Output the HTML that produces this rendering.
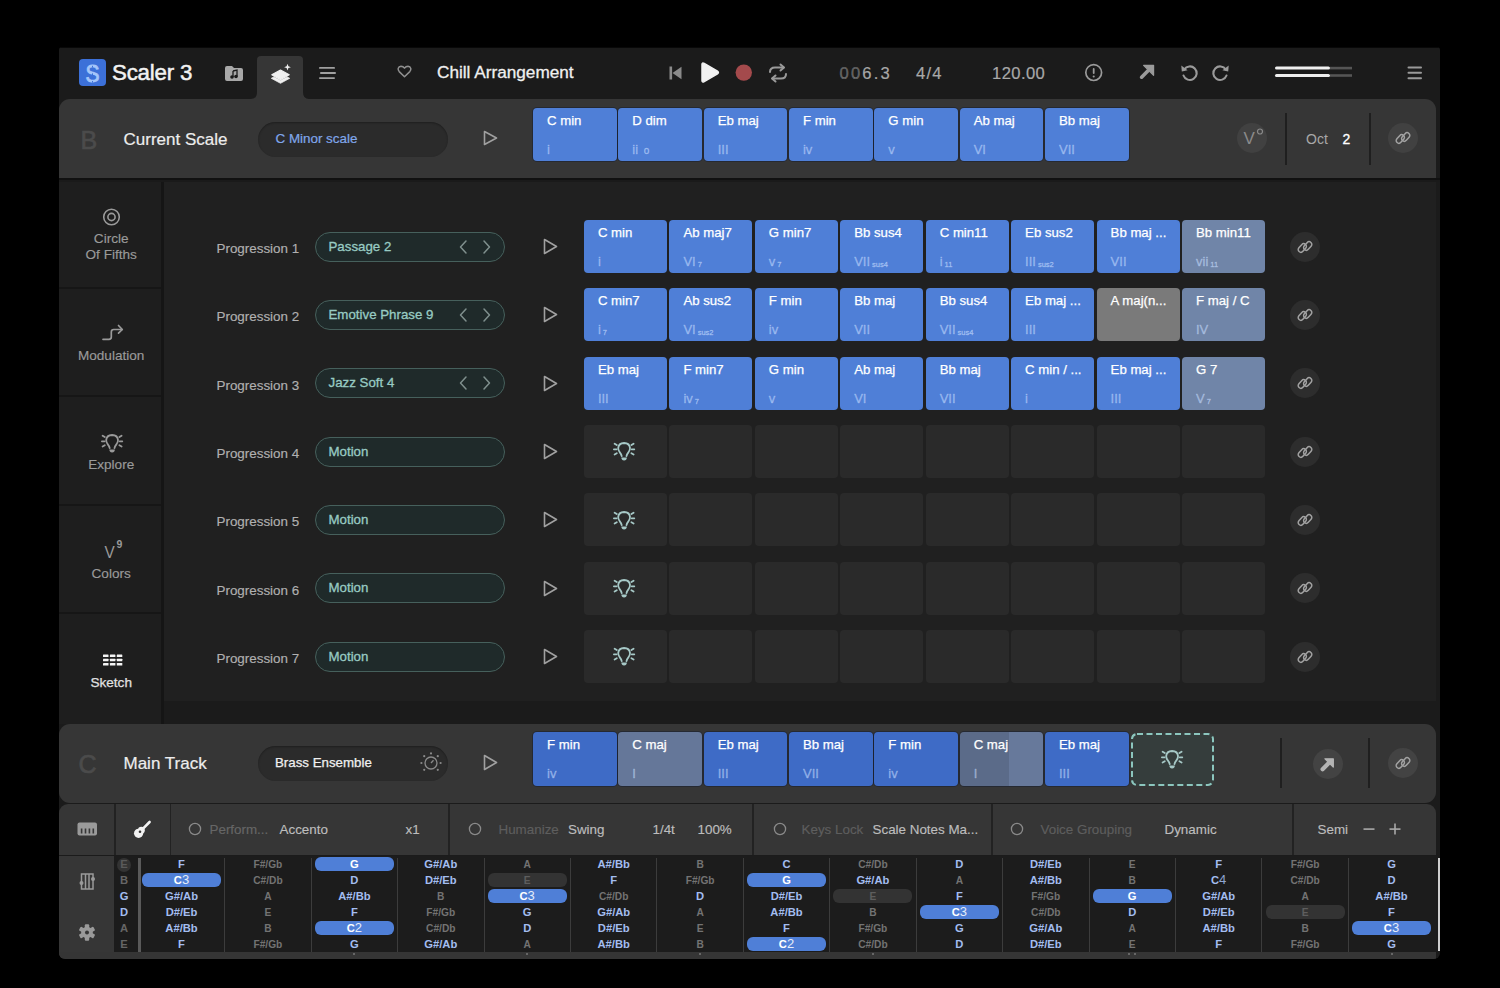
<!DOCTYPE html><html><head><meta charset="utf-8"><style>
*{margin:0;padding:0;box-sizing:border-box}
html,body{width:1500px;height:988px;background:#000;overflow:hidden;font-family:"Liberation Sans",sans-serif;color:#ddd}
.a{position:absolute;white-space:nowrap}
svg.a{overflow:visible}
#win{position:absolute;left:59px;top:47px;width:1381px;height:912px;background:#1b1b1b;overflow:hidden;border-radius:3px 3px 6px 6px}
.sec{position:absolute;background:#363636;border-radius:11px}
.card{position:absolute;width:83px;height:53px;border-radius:4px;background:#4f7fd7}
.card .n{position:absolute;left:14px;top:5px;font-size:13.2px;color:#fff;white-space:nowrap;-webkit-text-stroke:0.25px #fff}
.card .r{position:absolute;left:14px;top:34.2px;font-size:13px;color:rgba(200,222,255,0.5);white-space:nowrap;-webkit-text-stroke:0.45px rgba(200,222,255,0.45)}
.card .r small{font-size:7.5px;position:relative;top:1px;margin-left:2px}
.empty{position:absolute;width:83px;height:53px;border-radius:4px;background:#2a2a2a}
.plabel{position:absolute;font-size:13.4px;color:#b0b0b0;white-space:nowrap;-webkit-text-stroke:0.15px #b0b0b0}
.pill{position:absolute;width:190px;height:30px;border-radius:15px;background:#1f2a2a;border:1.6px solid #46605c}
.pill .t{position:absolute;left:13px;top:6.3px;font-size:13.3px;color:#98cbc3;white-space:nowrap;-webkit-text-stroke:0.3px #98cbc3}
.side{position:absolute;left:0;width:102px;background:#1e1e1e}
.lbl{position:absolute;left:1.7px;width:101px;text-align:center;font-size:13.6px;color:#9a9a9a;line-height:16px;-webkit-text-stroke:0.15px #9a9a9a}
.fb{position:absolute;font-size:11.2px;font-weight:bold;text-align:center;width:86px;line-height:16px;white-space:nowrap}
.tb{position:absolute;font-size:13.4px;white-space:nowrap;-webkit-text-stroke:0.15px currentColor}
</style></head><body>
<div id="win">
<div class="a" style="left:198px;top:9px;width:46px;height:50px;background:#363636;border-radius:4px 4px 0 0"></div>
<svg class="a" style="left:192.00px;top:45.00px" width="6" height="7" viewBox="0 0 6 7" ><path d="M0 7 Q6 7 6 0 L6 7 Z" fill="#363636"/></svg>
<svg class="a" style="left:244.00px;top:45.00px" width="6" height="7" viewBox="0 0 6 7" ><path d="M6 7 Q0 7 0 0 L0 7 Z" fill="#363636"/></svg>
<div class="a" style="left:20px;top:12px;width:27px;height:27px;background:#3c70d8;border-radius:4px"></div>
<svg class="a" style="left:20.00px;top:12.00px" width="27" height="27" viewBox="0 0 27 27" ><g transform="translate(13.5,0) scale(0.86,1)"><text x="0" y="22.6" text-anchor="middle" font-family="Liberation Sans" font-size="24.5" fill="#a4c6fa" stroke="#a4c6fa" stroke-width="0.9">S</text></g><path d="M13.5 3 V25" stroke="#3c70d8" stroke-width="1" stroke-dasharray="1.6 2.2"/></svg>
<div class="a" style="left:53px;top:13px;font-size:22.3px;color:#f2f2f2;-webkit-text-stroke:0.5px #f2f2f2;letter-spacing:-0.2px">Scaler 3</div>
<svg class="a" style="left:165.00px;top:18.00px" width="20" height="17" viewBox="0 0 20 17" ><path d="M1 3 Q1 1 3 1 L8 1 L10 3 L17 3 Q19 3 19 5 L19 14 Q19 16 17 16 L3 16 Q1 16 1 14 Z" fill="#a8a8a8"/><path d="M9 6 L13 5 L13 11.5" stroke="#1b1b1b" stroke-width="1.3" fill="none"/><circle cx="8" cy="12" r="1.8" fill="#1b1b1b"/><circle cx="12" cy="11.5" r="1.8" fill="#1b1b1b"/><path d="M9 6 L9 12" stroke="#1b1b1b" stroke-width="1.3"/></svg>
<svg class="a" style="left:209.00px;top:16.00px" width="26" height="22" viewBox="0 0 26 22" ><path d="M3.8 11.8 L12.5 7 L21.2 11.8 L12.5 16.6 Z" fill="#f0f0f0" stroke="#f0f0f0" stroke-width="1.2" stroke-linejoin="round"/><path d="M3.3 15.3 L6 13.9 L12.5 17.5 L19 13.9 L21.7 15.3 L12.5 20.3 Z" fill="#f0f0f0" stroke="#f0f0f0" stroke-width="0.8" stroke-linejoin="round"/><path d="M19.5 0.8 L20.4 3.3 L22.9 4.2 L20.4 5.1 L19.5 7.6 L18.6 5.1 L16.1 4.2 L18.6 3.3 Z" fill="#f0f0f0"/></svg>
<svg class="a" style="left:259.00px;top:19.00px" width="19" height="14" viewBox="0 0 19 14" ><rect x="1" y="1" width="16" height="1.8" rx="0.9" fill="#a0a0a0"/><rect x="2" y="6.1" width="16" height="1.8" rx="0.9" fill="#a0a0a0"/><rect x="1" y="11.2" width="16" height="1.8" rx="0.9" fill="#a0a0a0"/></svg>
<svg class="a" style="left:338.00px;top:18.00px" width="15" height="13" viewBox="0 0 15 13" ><path d="M7.5 11.8 L2.2 6.6 Q0.8 5.1 1.2 3.4 Q1.8 1.3 4 1.2 Q6.2 1.2 7.5 3.2 Q8.8 1.2 11 1.2 Q13.2 1.3 13.8 3.4 Q14.2 5.1 12.8 6.6 Z" fill="none" stroke="#8f8f8f" stroke-width="1.5" stroke-linejoin="round"/></svg>
<div class="a" style="left:378px;top:15px;font-size:17.2px;color:#f0f0f0;-webkit-text-stroke:0.3px #f0f0f0">Chill Arrangement</div>
<svg class="a" style="left:609.00px;top:19.00px" width="14" height="14" viewBox="0 0 14 14" ><rect x="1.5" y="0.5" width="2.6" height="13" fill="#8a8a8a"/><path d="M13.5 0.8 L4.5 7 L13.5 13.2 Z" fill="#8a8a8a"/></svg>
<svg class="a" style="left:640.00px;top:14.00px" width="21" height="24" viewBox="0 0 21 24" ><path d="M3 3.5 Q3 1.2 5.2 2.4 L18.5 10.2 Q20.3 11.5 18.5 12.8 L5.2 20.6 Q3 21.8 3 19.5 Z" fill="#f2f2f2" stroke="#f2f2f2" stroke-width="1.5" stroke-linejoin="round"/></svg>
<svg class="a" style="left:676.00px;top:17.00px" width="18" height="18" viewBox="0 0 18 18" ><circle cx="8.8" cy="8.6" r="8.2" fill="#a44a4c"/></svg>
<svg class="a" style="left:708.00px;top:16.00px" width="22" height="20" viewBox="0 0 22 20" ><path d="M3 9 Q3 4.5 8 4.5 L16.5 4.5" fill="none" stroke="#9a9a9a" stroke-width="2" stroke-linecap="round"/><path d="M13.5 1.5 L17 4.5 L13.5 7.5" fill="none" stroke="#9a9a9a" stroke-width="2" stroke-linecap="round" stroke-linejoin="round"/><path d="M19 11 Q19 15.5 14 15.5 L5.5 15.5" fill="none" stroke="#9a9a9a" stroke-width="2" stroke-linecap="round"/><path d="M8.5 12.5 L5 15.5 L8.5 18.5" fill="none" stroke="#9a9a9a" stroke-width="2" stroke-linecap="round" stroke-linejoin="round"/></svg>
<div class="a" style="left:780.5px;top:16.5px;font-size:16.6px;color:#a8a8a8;letter-spacing:2.2px;-webkit-text-stroke:0.2px #a8a8a8"><span style="color:#5a5a5a">00</span>6.3</div>
<div class="a" style="left:857px;top:16.5px;font-size:16.6px;color:#a8a8a8;letter-spacing:1.2px;-webkit-text-stroke:0.2px #a8a8a8">4/4</div>
<div class="a" style="left:933px;top:16.5px;font-size:16.6px;color:#a8a8a8;letter-spacing:0.4px;-webkit-text-stroke:0.2px #a8a8a8">120.00</div>
<svg class="a" style="left:1025.00px;top:16.00px" width="20" height="20" viewBox="0 0 20 20" ><circle cx="9.7" cy="9.6" r="7.9" fill="none" stroke="#9a9a9a" stroke-width="1.7"/><rect x="8.8" y="5" width="1.8" height="6" rx="0.9" fill="#9a9a9a"/><circle cx="9.7" cy="13.5" r="1.05" fill="#9a9a9a"/></svg>
<svg class="a" style="left:1080.00px;top:17.00px" width="16" height="16" viewBox="0 0 16 16" ><path d="M2.6 13.2 L9 6.8" stroke="#9a9a9a" stroke-width="3.6" stroke-linecap="round"/><path d="M4.6 1.3 L14.6 1.3 L14.6 11.3 Z" fill="#9a9a9a" stroke="#9a9a9a" stroke-width="1.2" stroke-linejoin="round"/></svg>
<svg class="a" style="left:1121.00px;top:16.00px" width="20" height="20" viewBox="0 0 20 20" ><path d="M4.2 6.5 A6.8 6.8 0 1 1 3.5 12.5" fill="none" stroke="#9a9a9a" stroke-width="2.1" stroke-linecap="round"/><path d="M1.3 2.5 L1.8 8.6 L7.6 7.2 Z" fill="#9a9a9a"/></svg>
<svg class="a" style="left:1151.00px;top:16.00px" width="20" height="20" viewBox="0 0 20 20" ><path d="M15.8 6.5 A6.8 6.8 0 1 0 16.5 12.5" fill="none" stroke="#9a9a9a" stroke-width="2.1" stroke-linecap="round"/><path d="M18.7 2.5 L18.2 8.6 L12.4 7.2 Z" fill="#9a9a9a"/></svg>
<svg class="a" style="left:1215.00px;top:18.00px" width="80" height="13" viewBox="0 0 80 13" ><rect x="1" y="1.6" width="55" height="3" rx="1.5" fill="#efefef"/><rect x="56" y="1.8" width="22" height="2.6" fill="#555"/><rect x="1" y="9" width="55" height="3" rx="1.5" fill="#efefef"/><rect x="56" y="9.2" width="22" height="2.6" fill="#555"/></svg>
<svg class="a" style="left:1347.00px;top:18.00px" width="18" height="16" viewBox="0 0 18 16" ><rect x="1.5" y="1.5" width="14.5" height="2" rx="1" fill="#9a9a9a"/><rect x="1.5" y="6.8" width="14.5" height="2" rx="1" fill="#9a9a9a"/><rect x="1.5" y="12.2" width="14.5" height="2" rx="1" fill="#9a9a9a"/></svg>
<div class="sec" style="left:0;top:52px;width:1377px;height:79px;border-radius:11px 11px 0 0"></div>
<div class="a" style="left:21.5px;top:78.5px;font-size:25px;color:#4b4b4b;-webkit-text-stroke:0.7px #4b4b4b">B</div>
<div class="a" style="left:64.5px;top:83px;font-size:17px;color:#ededed;-webkit-text-stroke:0.2px #ededed">Current Scale</div>
<div class="a" style="left:199px;top:75px;width:190px;height:35px;border-radius:17.5px;background:#2b2b2b;box-shadow:inset 0 1px 2px rgba(0,0,0,0.3)"></div>
<div class="a" style="left:216.5px;top:84px;font-size:13.4px;color:#80a7ea;-webkit-text-stroke:0.2px #80a7ea">C Minor scale</div>
<svg class="a" style="left:422.00px;top:82.00px" width="18" height="18" viewBox="0 0 18 18" ><path d="M3.5 2.5 L15.5 9 L3.5 15.5 Z" fill="none" stroke="#a0a0a0" stroke-width="1.6" stroke-linejoin="round"/></svg>
<div class="card" style="left:474.00px;top:60.8px;height:53.4px;width:83.8px;box-shadow:0 0 0 1px rgba(20,28,45,0.5)"><div class="n">C min</div><div class="r">i</div></div>
<div class="card" style="left:559.33px;top:60.8px;height:53.4px;width:83.8px;box-shadow:0 0 0 1px rgba(20,28,45,0.5)"><div class="n">D dim</div><div class="r">ii <small style="font-size:10px;top:0">o</small></div></div>
<div class="card" style="left:644.66px;top:60.8px;height:53.4px;width:83.8px;box-shadow:0 0 0 1px rgba(20,28,45,0.5)"><div class="n">Eb maj</div><div class="r">III</div></div>
<div class="card" style="left:729.99px;top:60.8px;height:53.4px;width:83.8px;box-shadow:0 0 0 1px rgba(20,28,45,0.5)"><div class="n">F min</div><div class="r">iv</div></div>
<div class="card" style="left:815.32px;top:60.8px;height:53.4px;width:83.8px;box-shadow:0 0 0 1px rgba(20,28,45,0.5)"><div class="n">G min</div><div class="r">v</div></div>
<div class="card" style="left:900.65px;top:60.8px;height:53.4px;width:83.8px;box-shadow:0 0 0 1px rgba(20,28,45,0.5)"><div class="n">Ab maj</div><div class="r">VI</div></div>
<div class="card" style="left:985.98px;top:60.8px;height:53.4px;width:83.8px;box-shadow:0 0 0 1px rgba(20,28,45,0.5)"><div class="n">Bb maj</div><div class="r">VII</div></div>
<div class="a" style="left:1178px;top:76px;width:30px;height:30px;border-radius:15px;background:#414141"></div>
<div class="a" style="left:1184.5px;top:82px;font-size:17px;color:#8a8a8a">V</div>
<svg class="a" style="left:1197.00px;top:81.00px" width="8" height="8" viewBox="0 0 8 8" ><circle cx="4" cy="3.5" r="2.5" fill="none" stroke="#8a8a8a" stroke-width="1.2"/></svg>
<div class="a" style="left:1226px;top:66px;width:1.5px;height:52px;background:#1f1f1f"></div>
<div class="a" style="left:1310px;top:66px;width:1.5px;height:52px;background:#1f1f1f"></div>
<div class="a" style="left:1247px;top:84px;font-size:14px;color:#a8a8a8">Oct</div>
<div class="a" style="left:1283.5px;top:84px;font-size:14px;color:#fff;-webkit-text-stroke:0.3px #fff">2</div>
<div class="a" style="left:1329.0px;top:76.0px;width:30px;height:30px;border-radius:15px;background:#414141"></div>
<svg class="a" style="left:1334.00px;top:81.00px" width="20" height="20" viewBox="0 0 20 20" ><g transform="translate(10,10)"><g fill="none" stroke="#a2a2a2" stroke-width="1.5"><rect x="-4.8" y="-2.7" width="9.6" height="5.4" rx="2.7" transform="translate(-2.7,1) rotate(-48)"/><rect x="-4.8" y="-2.7" width="9.6" height="5.4" rx="2.7" transform="translate(2.7,-1) rotate(-48)"/></g></g></svg>
<div class="a" style="left:105px;top:132px;width:1272px;height:522px;background:#202020"></div>
<div class="a" style="left:0;top:-0.5px;width:1381px;height:1.2px;background:rgba(0,0,0,0.7)"></div>
<div class="side" style="top:132px;height:108px"></div>
<div class="side" style="top:241px;height:107px"></div>
<div class="side" style="top:349px;height:108px"></div>
<div class="side" style="top:458px;height:107px"></div>
<div class="side" style="top:566px;height:111px"></div>
<div class="a" style="left:102px;top:132px;width:3px;height:545px;background:#151515"></div>
<div class="a" style="left:0;top:240px;width:102px;height:2px;background:#161616"></div>
<div class="a" style="left:0;top:348px;width:102px;height:2px;background:#161616"></div>
<div class="a" style="left:0;top:457px;width:102px;height:2px;background:#161616"></div>
<div class="a" style="left:0;top:565px;width:102px;height:2px;background:#161616"></div>
<div class="a" style="left:0;top:131px;width:1381px;height:1.5px;background:#111"></div>
<div class="a" style="left:0;top:132.5px;width:1381px;height:2.5px;background:#1a1a1a"></div>
<svg class="a" style="left:42.00px;top:160.00px" width="21" height="21" viewBox="0 0 21 21" ><circle cx="10.5" cy="10" r="7.8" fill="none" stroke="#9a9a9a" stroke-width="1.6"/><circle cx="10.5" cy="10" r="3.6" fill="none" stroke="#9a9a9a" stroke-width="1.6"/></svg>
<div class="lbl" style="top:184px">Circle<br>Of Fifths</div>
<svg class="a" style="left:41.00px;top:275.00px" width="26" height="20" viewBox="0 0 26 20" ><path d="M3 17.3 L9 17.3 Q11.3 17.3 11.3 15 L11.3 9.9 Q11.3 7.5 13.7 7.5 L22 7.5" fill="none" stroke="#9a9a9a" stroke-width="1.7" stroke-linecap="round"/><path d="M18.5 3.5 L22.3 7.5 L18.5 11.2" fill="none" stroke="#9a9a9a" stroke-width="1.7" stroke-linecap="round" stroke-linejoin="round"/></svg>
<div class="lbl" style="top:300.5px">Modulation</div>
<svg class="a" style="left:40.70px;top:385.50px" width="24" height="21" viewBox="0 0 24 21" ><path d="M9.7 15.2 Q9.4 13.2 7.8 11.3 Q6.1 9.3 6.2 7.1 Q6.5 2.2 12.1 2.0 Q17.7 2.2 18.0 7.1 Q18.1 9.3 16.4 11.3 Q14.8 13.2 14.5 15.2" fill="none" stroke="#9a9a9a" stroke-width="1.8" stroke-linecap="round" stroke-linejoin="round"/><path d="M9.3 16.6 L14.9 16.6 Q14.7 19.6 12.1 19.6 Q9.5 19.6 9.3 16.6 Z" fill="#9a9a9a"/><g stroke="#9a9a9a" stroke-width="1.8" stroke-linecap="round"><path d="M1.9 8.3 L4.6 8.3"/><path d="M19.6 8.3 L22.3 8.3"/><path d="M2.6 2.7 L4.8 4.1"/><path d="M21.6 2.7 L19.4 4.1"/><path d="M2.6 13.5 L4.8 12.2"/><path d="M21.6 13.5 L19.4 12.2"/></g></svg>
<div class="lbl" style="top:409.5px">Explore</div>
<div class="a" style="left:44.5px;top:496px;font-size:17px;color:#9a9a9a;transform:scaleX(0.9)">V</div>
<div class="a" style="left:57.5px;top:490.5px;font-size:10.5px;color:#9a9a9a;font-weight:bold">9</div>
<div class="lbl" style="top:518.5px">Colors</div>
<svg class="a" style="left:43.00px;top:607.00px" width="21" height="12" viewBox="0 0 21 12" ><rect x="1.0" y="0.50" width="5.5" height="2.6" rx="0.4" fill="#f4f4f4"/><rect x="7.9" y="0.50" width="5.5" height="2.6" rx="0.4" fill="#f4f4f4"/><rect x="14.8" y="0.50" width="5.5" height="2.6" rx="0.4" fill="#f4f4f4"/><rect x="1.0" y="4.75" width="5.5" height="2.6" rx="0.4" fill="#f4f4f4"/><rect x="7.9" y="4.75" width="5.5" height="2.6" rx="0.4" fill="#f4f4f4"/><rect x="14.8" y="4.75" width="5.5" height="2.6" rx="0.4" fill="#f4f4f4"/><rect x="1.0" y="9.00" width="5.5" height="2.6" rx="0.4" fill="#f4f4f4"/><rect x="7.9" y="9.00" width="5.5" height="2.6" rx="0.4" fill="#f4f4f4"/><rect x="14.8" y="9.00" width="5.5" height="2.6" rx="0.4" fill="#f4f4f4"/></svg>
<div class="lbl" style="top:627.7px;color:#e2e2e2;-webkit-text-stroke:0.25px #e2e2e2">Sketch</div>
<div class="plabel" style="left:157.5px;top:194.0px">Progression 1</div>
<div class="pill" style="left:255.5px;top:184.5px"><div class="t">Passage 2</div></div>
<svg class="a" style="left:398.00px;top:191.50px" width="36" height="16" viewBox="0 0 36 16" ><path d="M9 2 L3.5 8 L9 14" fill="none" stroke="#7f8f8d" stroke-width="1.5" stroke-linecap="round" stroke-linejoin="round"/><path d="M27 2 L32.5 8 L27 14" fill="none" stroke="#7f8f8d" stroke-width="1.5" stroke-linecap="round" stroke-linejoin="round"/></svg>
<svg class="a" style="left:482.00px;top:190.00px" width="18" height="19" viewBox="0 0 18 19" ><path d="M3.5 2.5 L15.5 9.5 L3.5 16.5 Z" fill="none" stroke="#a0a0a0" stroke-width="1.6" stroke-linejoin="round"/></svg>
<div class="card" style="left:524.9px;top:173.0px;background:#4f7fd7"><div class="n">C min</div><div class="r">i</div></div>
<div class="card" style="left:610.4px;top:173.0px;background:#4f7fd7"><div class="n">Ab maj7</div><div class="r">VI<small>7</small></div></div>
<div class="card" style="left:695.8px;top:173.0px;background:#4f7fd7"><div class="n">G min7</div><div class="r">v<small>7</small></div></div>
<div class="card" style="left:781.2px;top:173.0px;background:#4f7fd7"><div class="n">Bb sus4</div><div class="r">VII<small>sus4</small></div></div>
<div class="card" style="left:866.7px;top:173.0px;background:#4f7fd7"><div class="n">C min11</div><div class="r">i<small>11</small></div></div>
<div class="card" style="left:952.1px;top:173.0px;background:#4f7fd7"><div class="n">Eb sus2</div><div class="r">III<small>sus2</small></div></div>
<div class="card" style="left:1037.6px;top:173.0px;background:#4f7fd7"><div class="n">Bb maj ...</div><div class="r">VII</div></div>
<div class="card" style="left:1123.0px;top:173.0px;background:#7085a8"><div class="n">Bb min11</div><div class="r">vii<small>11</small></div></div>
<div class="a" style="left:1231.2px;top:184.7px;width:30px;height:30px;border-radius:15px;background:#2d2d2d"></div>
<svg class="a" style="left:1236.20px;top:189.70px" width="20" height="20" viewBox="0 0 20 20" ><g transform="translate(10,10)"><g fill="none" stroke="#a2a2a2" stroke-width="1.5"><rect x="-4.8" y="-2.7" width="9.6" height="5.4" rx="2.7" transform="translate(-2.7,1) rotate(-48)"/><rect x="-4.8" y="-2.7" width="9.6" height="5.4" rx="2.7" transform="translate(2.7,-1) rotate(-48)"/></g></g></svg>
<div class="plabel" style="left:157.5px;top:262.3px">Progression 2</div>
<div class="pill" style="left:255.5px;top:252.8px"><div class="t">Emotive Phrase 9</div></div>
<svg class="a" style="left:398.00px;top:259.83px" width="36" height="16" viewBox="0 0 36 16" ><path d="M9 2 L3.5 8 L9 14" fill="none" stroke="#7f8f8d" stroke-width="1.5" stroke-linecap="round" stroke-linejoin="round"/><path d="M27 2 L32.5 8 L27 14" fill="none" stroke="#7f8f8d" stroke-width="1.5" stroke-linecap="round" stroke-linejoin="round"/></svg>
<svg class="a" style="left:482.00px;top:258.33px" width="18" height="19" viewBox="0 0 18 19" ><path d="M3.5 2.5 L15.5 9.5 L3.5 16.5 Z" fill="none" stroke="#a0a0a0" stroke-width="1.6" stroke-linejoin="round"/></svg>
<div class="card" style="left:524.9px;top:241.3px;background:#4f7fd7"><div class="n">C min7</div><div class="r">i<small>7</small></div></div>
<div class="card" style="left:610.4px;top:241.3px;background:#4f7fd7"><div class="n">Ab sus2</div><div class="r">VI<small>sus2</small></div></div>
<div class="card" style="left:695.8px;top:241.3px;background:#4f7fd7"><div class="n">F min</div><div class="r">iv</div></div>
<div class="card" style="left:781.2px;top:241.3px;background:#4f7fd7"><div class="n">Bb maj</div><div class="r">VII</div></div>
<div class="card" style="left:866.7px;top:241.3px;background:#4f7fd7"><div class="n">Bb sus4</div><div class="r">VII<small>sus4</small></div></div>
<div class="card" style="left:952.1px;top:241.3px;background:#4f7fd7"><div class="n">Eb maj ...</div><div class="r">III</div></div>
<div class="card" style="left:1037.6px;top:241.3px;background:#7a7a7a"><div class="n">A maj(n...</div><div class="r"></div></div>
<div class="card" style="left:1123.0px;top:241.3px;background:#7085a8"><div class="n">F maj / C</div><div class="r">IV</div></div>
<div class="a" style="left:1231.2px;top:253.0px;width:30px;height:30px;border-radius:15px;background:#2d2d2d"></div>
<svg class="a" style="left:1236.20px;top:258.03px" width="20" height="20" viewBox="0 0 20 20" ><g transform="translate(10,10)"><g fill="none" stroke="#a2a2a2" stroke-width="1.5"><rect x="-4.8" y="-2.7" width="9.6" height="5.4" rx="2.7" transform="translate(-2.7,1) rotate(-48)"/><rect x="-4.8" y="-2.7" width="9.6" height="5.4" rx="2.7" transform="translate(2.7,-1) rotate(-48)"/></g></g></svg>
<div class="plabel" style="left:157.5px;top:330.7px">Progression 3</div>
<div class="pill" style="left:255.5px;top:321.2px"><div class="t">Jazz Soft 4</div></div>
<svg class="a" style="left:398.00px;top:328.16px" width="36" height="16" viewBox="0 0 36 16" ><path d="M9 2 L3.5 8 L9 14" fill="none" stroke="#7f8f8d" stroke-width="1.5" stroke-linecap="round" stroke-linejoin="round"/><path d="M27 2 L32.5 8 L27 14" fill="none" stroke="#7f8f8d" stroke-width="1.5" stroke-linecap="round" stroke-linejoin="round"/></svg>
<svg class="a" style="left:482.00px;top:326.66px" width="18" height="19" viewBox="0 0 18 19" ><path d="M3.5 2.5 L15.5 9.5 L3.5 16.5 Z" fill="none" stroke="#a0a0a0" stroke-width="1.6" stroke-linejoin="round"/></svg>
<div class="card" style="left:524.9px;top:309.7px;background:#4f7fd7"><div class="n">Eb maj</div><div class="r">III</div></div>
<div class="card" style="left:610.4px;top:309.7px;background:#4f7fd7"><div class="n">F min7</div><div class="r">iv<small>7</small></div></div>
<div class="card" style="left:695.8px;top:309.7px;background:#4f7fd7"><div class="n">G min</div><div class="r">v</div></div>
<div class="card" style="left:781.2px;top:309.7px;background:#4f7fd7"><div class="n">Ab maj</div><div class="r">VI</div></div>
<div class="card" style="left:866.7px;top:309.7px;background:#4f7fd7"><div class="n">Bb maj</div><div class="r">VII</div></div>
<div class="card" style="left:952.1px;top:309.7px;background:#4f7fd7"><div class="n">C min / ...</div><div class="r">i</div></div>
<div class="card" style="left:1037.6px;top:309.7px;background:#4f7fd7"><div class="n">Eb maj ...</div><div class="r">III</div></div>
<div class="card" style="left:1123.0px;top:309.7px;background:#7085a8"><div class="n">G 7</div><div class="r">V<small>7</small></div></div>
<div class="a" style="left:1231.2px;top:321.4px;width:30px;height:30px;border-radius:15px;background:#2d2d2d"></div>
<svg class="a" style="left:1236.20px;top:326.36px" width="20" height="20" viewBox="0 0 20 20" ><g transform="translate(10,10)"><g fill="none" stroke="#a2a2a2" stroke-width="1.5"><rect x="-4.8" y="-2.7" width="9.6" height="5.4" rx="2.7" transform="translate(-2.7,1) rotate(-48)"/><rect x="-4.8" y="-2.7" width="9.6" height="5.4" rx="2.7" transform="translate(2.7,-1) rotate(-48)"/></g></g></svg>
<div class="plabel" style="left:157.5px;top:399.0px">Progression 4</div>
<div class="pill" style="left:255.5px;top:389.5px"><div class="t">Motion</div></div>
<svg class="a" style="left:482.00px;top:394.99px" width="18" height="19" viewBox="0 0 18 19" ><path d="M3.5 2.5 L15.5 9.5 L3.5 16.5 Z" fill="none" stroke="#a0a0a0" stroke-width="1.6" stroke-linejoin="round"/></svg>
<div class="empty" style="left:524.9px;top:378.0px"></div>
<svg class="a" style="left:553.40px;top:394.49px" width="24" height="21" viewBox="0 0 24 21" ><path d="M9.7 15.2 Q9.4 13.2 7.8 11.3 Q6.1 9.3 6.2 7.1 Q6.5 2.2 12.1 2.0 Q17.7 2.2 18.0 7.1 Q18.1 9.3 16.4 11.3 Q14.8 13.2 14.5 15.2" fill="none" stroke="#a6c8c6" stroke-width="1.8" stroke-linecap="round" stroke-linejoin="round"/><path d="M9.3 16.6 L14.9 16.6 Q14.7 19.6 12.1 19.6 Q9.5 19.6 9.3 16.6 Z" fill="#a6c8c6"/><g stroke="#a6c8c6" stroke-width="1.8" stroke-linecap="round"><path d="M1.9 8.3 L4.6 8.3"/><path d="M19.6 8.3 L22.3 8.3"/><path d="M2.6 2.7 L4.8 4.1"/><path d="M21.6 2.7 L19.4 4.1"/><path d="M2.6 13.5 L4.8 12.2"/><path d="M21.6 13.5 L19.4 12.2"/></g></svg>
<div class="empty" style="left:610.4px;top:378.0px"></div>
<div class="empty" style="left:695.8px;top:378.0px"></div>
<div class="empty" style="left:781.2px;top:378.0px"></div>
<div class="empty" style="left:866.7px;top:378.0px"></div>
<div class="empty" style="left:952.1px;top:378.0px"></div>
<div class="empty" style="left:1037.6px;top:378.0px"></div>
<div class="empty" style="left:1123.0px;top:378.0px"></div>
<div class="a" style="left:1231.2px;top:389.7px;width:30px;height:30px;border-radius:15px;background:#2d2d2d"></div>
<svg class="a" style="left:1236.20px;top:394.69px" width="20" height="20" viewBox="0 0 20 20" ><g transform="translate(10,10)"><g fill="none" stroke="#a2a2a2" stroke-width="1.5"><rect x="-4.8" y="-2.7" width="9.6" height="5.4" rx="2.7" transform="translate(-2.7,1) rotate(-48)"/><rect x="-4.8" y="-2.7" width="9.6" height="5.4" rx="2.7" transform="translate(2.7,-1) rotate(-48)"/></g></g></svg>
<div class="plabel" style="left:157.5px;top:467.3px">Progression 5</div>
<div class="pill" style="left:255.5px;top:457.8px"><div class="t">Motion</div></div>
<svg class="a" style="left:482.00px;top:463.32px" width="18" height="19" viewBox="0 0 18 19" ><path d="M3.5 2.5 L15.5 9.5 L3.5 16.5 Z" fill="none" stroke="#a0a0a0" stroke-width="1.6" stroke-linejoin="round"/></svg>
<div class="empty" style="left:524.9px;top:446.3px"></div>
<svg class="a" style="left:553.40px;top:462.82px" width="24" height="21" viewBox="0 0 24 21" ><path d="M9.7 15.2 Q9.4 13.2 7.8 11.3 Q6.1 9.3 6.2 7.1 Q6.5 2.2 12.1 2.0 Q17.7 2.2 18.0 7.1 Q18.1 9.3 16.4 11.3 Q14.8 13.2 14.5 15.2" fill="none" stroke="#a6c8c6" stroke-width="1.8" stroke-linecap="round" stroke-linejoin="round"/><path d="M9.3 16.6 L14.9 16.6 Q14.7 19.6 12.1 19.6 Q9.5 19.6 9.3 16.6 Z" fill="#a6c8c6"/><g stroke="#a6c8c6" stroke-width="1.8" stroke-linecap="round"><path d="M1.9 8.3 L4.6 8.3"/><path d="M19.6 8.3 L22.3 8.3"/><path d="M2.6 2.7 L4.8 4.1"/><path d="M21.6 2.7 L19.4 4.1"/><path d="M2.6 13.5 L4.8 12.2"/><path d="M21.6 13.5 L19.4 12.2"/></g></svg>
<div class="empty" style="left:610.4px;top:446.3px"></div>
<div class="empty" style="left:695.8px;top:446.3px"></div>
<div class="empty" style="left:781.2px;top:446.3px"></div>
<div class="empty" style="left:866.7px;top:446.3px"></div>
<div class="empty" style="left:952.1px;top:446.3px"></div>
<div class="empty" style="left:1037.6px;top:446.3px"></div>
<div class="empty" style="left:1123.0px;top:446.3px"></div>
<div class="a" style="left:1231.2px;top:458.0px;width:30px;height:30px;border-radius:15px;background:#2d2d2d"></div>
<svg class="a" style="left:1236.20px;top:463.02px" width="20" height="20" viewBox="0 0 20 20" ><g transform="translate(10,10)"><g fill="none" stroke="#a2a2a2" stroke-width="1.5"><rect x="-4.8" y="-2.7" width="9.6" height="5.4" rx="2.7" transform="translate(-2.7,1) rotate(-48)"/><rect x="-4.8" y="-2.7" width="9.6" height="5.4" rx="2.7" transform="translate(2.7,-1) rotate(-48)"/></g></g></svg>
<div class="plabel" style="left:157.5px;top:535.6px">Progression 6</div>
<div class="pill" style="left:255.5px;top:526.1px"><div class="t">Motion</div></div>
<svg class="a" style="left:482.00px;top:531.65px" width="18" height="19" viewBox="0 0 18 19" ><path d="M3.5 2.5 L15.5 9.5 L3.5 16.5 Z" fill="none" stroke="#a0a0a0" stroke-width="1.6" stroke-linejoin="round"/></svg>
<div class="empty" style="left:524.9px;top:514.6px"></div>
<svg class="a" style="left:553.40px;top:531.15px" width="24" height="21" viewBox="0 0 24 21" ><path d="M9.7 15.2 Q9.4 13.2 7.8 11.3 Q6.1 9.3 6.2 7.1 Q6.5 2.2 12.1 2.0 Q17.7 2.2 18.0 7.1 Q18.1 9.3 16.4 11.3 Q14.8 13.2 14.5 15.2" fill="none" stroke="#a6c8c6" stroke-width="1.8" stroke-linecap="round" stroke-linejoin="round"/><path d="M9.3 16.6 L14.9 16.6 Q14.7 19.6 12.1 19.6 Q9.5 19.6 9.3 16.6 Z" fill="#a6c8c6"/><g stroke="#a6c8c6" stroke-width="1.8" stroke-linecap="round"><path d="M1.9 8.3 L4.6 8.3"/><path d="M19.6 8.3 L22.3 8.3"/><path d="M2.6 2.7 L4.8 4.1"/><path d="M21.6 2.7 L19.4 4.1"/><path d="M2.6 13.5 L4.8 12.2"/><path d="M21.6 13.5 L19.4 12.2"/></g></svg>
<div class="empty" style="left:610.4px;top:514.6px"></div>
<div class="empty" style="left:695.8px;top:514.6px"></div>
<div class="empty" style="left:781.2px;top:514.6px"></div>
<div class="empty" style="left:866.7px;top:514.6px"></div>
<div class="empty" style="left:952.1px;top:514.6px"></div>
<div class="empty" style="left:1037.6px;top:514.6px"></div>
<div class="empty" style="left:1123.0px;top:514.6px"></div>
<div class="a" style="left:1231.2px;top:526.4px;width:30px;height:30px;border-radius:15px;background:#2d2d2d"></div>
<svg class="a" style="left:1236.20px;top:531.35px" width="20" height="20" viewBox="0 0 20 20" ><g transform="translate(10,10)"><g fill="none" stroke="#a2a2a2" stroke-width="1.5"><rect x="-4.8" y="-2.7" width="9.6" height="5.4" rx="2.7" transform="translate(-2.7,1) rotate(-48)"/><rect x="-4.8" y="-2.7" width="9.6" height="5.4" rx="2.7" transform="translate(2.7,-1) rotate(-48)"/></g></g></svg>
<div class="plabel" style="left:157.5px;top:604.0px">Progression 7</div>
<div class="pill" style="left:255.5px;top:594.5px"><div class="t">Motion</div></div>
<svg class="a" style="left:482.00px;top:599.98px" width="18" height="19" viewBox="0 0 18 19" ><path d="M3.5 2.5 L15.5 9.5 L3.5 16.5 Z" fill="none" stroke="#a0a0a0" stroke-width="1.6" stroke-linejoin="round"/></svg>
<div class="empty" style="left:524.9px;top:583.0px"></div>
<svg class="a" style="left:553.40px;top:599.48px" width="24" height="21" viewBox="0 0 24 21" ><path d="M9.7 15.2 Q9.4 13.2 7.8 11.3 Q6.1 9.3 6.2 7.1 Q6.5 2.2 12.1 2.0 Q17.7 2.2 18.0 7.1 Q18.1 9.3 16.4 11.3 Q14.8 13.2 14.5 15.2" fill="none" stroke="#a6c8c6" stroke-width="1.8" stroke-linecap="round" stroke-linejoin="round"/><path d="M9.3 16.6 L14.9 16.6 Q14.7 19.6 12.1 19.6 Q9.5 19.6 9.3 16.6 Z" fill="#a6c8c6"/><g stroke="#a6c8c6" stroke-width="1.8" stroke-linecap="round"><path d="M1.9 8.3 L4.6 8.3"/><path d="M19.6 8.3 L22.3 8.3"/><path d="M2.6 2.7 L4.8 4.1"/><path d="M21.6 2.7 L19.4 4.1"/><path d="M2.6 13.5 L4.8 12.2"/><path d="M21.6 13.5 L19.4 12.2"/></g></svg>
<div class="empty" style="left:610.4px;top:583.0px"></div>
<div class="empty" style="left:695.8px;top:583.0px"></div>
<div class="empty" style="left:781.2px;top:583.0px"></div>
<div class="empty" style="left:866.7px;top:583.0px"></div>
<div class="empty" style="left:952.1px;top:583.0px"></div>
<div class="empty" style="left:1037.6px;top:583.0px"></div>
<div class="empty" style="left:1123.0px;top:583.0px"></div>
<div class="a" style="left:1231.2px;top:594.7px;width:30px;height:30px;border-radius:15px;background:#2d2d2d"></div>
<svg class="a" style="left:1236.20px;top:599.68px" width="20" height="20" viewBox="0 0 20 20" ><g transform="translate(10,10)"><g fill="none" stroke="#a2a2a2" stroke-width="1.5"><rect x="-4.8" y="-2.7" width="9.6" height="5.4" rx="2.7" transform="translate(-2.7,1) rotate(-48)"/><rect x="-4.8" y="-2.7" width="9.6" height="5.4" rx="2.7" transform="translate(2.7,-1) rotate(-48)"/></g></g></svg>
<div class="sec" style="left:0;top:677px;width:1377px;height:79px"></div>
<div class="a" style="left:19.5px;top:702.5px;font-size:25px;color:#4b4b4b;-webkit-text-stroke:0.7px #4b4b4b">C</div>
<div class="a" style="left:64.5px;top:707px;font-size:17px;color:#ededed;-webkit-text-stroke:0.2px #ededed">Main Track</div>
<div class="a" style="left:199px;top:699px;width:190px;height:35px;border-radius:17.5px;background:#2b2b2b;box-shadow:inset 0 1px 2px rgba(0,0,0,0.3)"></div>
<div class="a" style="left:216px;top:708px;font-size:13.3px;color:#f0f0f0;-webkit-text-stroke:0.25px #f0f0f0">Brass Ensemble</div>
<svg class="a" style="left:360.00px;top:704.00px" width="24" height="24" viewBox="0 0 24 24" ><circle cx="12" cy="12" r="6" fill="none" stroke="#8a8a8a" stroke-width="1.3"/><path d="M12 12 L14.5 9.2" stroke="#8a8a8a" stroke-width="1.3"/><circle cx="5.21" cy="18.79" r="1.1" fill="#8a8a8a"/><circle cx="2.40" cy="12.00" r="1.1" fill="#8a8a8a"/><circle cx="5.21" cy="5.21" r="1.1" fill="#8a8a8a"/><circle cx="12.00" cy="2.40" r="1.1" fill="#8a8a8a"/><circle cx="18.79" cy="5.21" r="1.1" fill="#8a8a8a"/><circle cx="21.60" cy="12.00" r="1.1" fill="#8a8a8a"/><circle cx="18.79" cy="18.79" r="1.1" fill="#8a8a8a"/></svg>
<svg class="a" style="left:422.00px;top:706.00px" width="18" height="19" viewBox="0 0 18 19" ><path d="M3.5 2.5 L15.5 9.5 L3.5 16.5 Z" fill="none" stroke="#a0a0a0" stroke-width="1.6" stroke-linejoin="round"/></svg>
<div class="card" style="left:474.00px;top:685.3px;height:53.3px;width:83.6px;background:#3e6bc6;box-shadow:0 0 0 1px rgba(20,28,45,0.5)"><div class="n">F min</div><div class="r">iv</div></div>
<div class="card" style="left:559.33px;top:685.3px;height:53.3px;width:83.6px;background:#657799;box-shadow:0 0 0 1px rgba(20,28,45,0.5)"><div class="n">C maj</div><div class="r">I</div></div>
<div class="card" style="left:644.66px;top:685.3px;height:53.3px;width:83.6px;background:#3e6bc6;box-shadow:0 0 0 1px rgba(20,28,45,0.5)"><div class="n">Eb maj</div><div class="r">III</div></div>
<div class="card" style="left:729.99px;top:685.3px;height:53.3px;width:83.6px;background:#3e6bc6;box-shadow:0 0 0 1px rgba(20,28,45,0.5)"><div class="n">Bb maj</div><div class="r">VII</div></div>
<div class="card" style="left:815.32px;top:685.3px;height:53.3px;width:83.6px;background:#3e6bc6;box-shadow:0 0 0 1px rgba(20,28,45,0.5)"><div class="n">F min</div><div class="r">iv</div></div>
<div class="card" style="left:900.65px;top:685.3px;height:53.3px;width:83.6px;background:linear-gradient(90deg,#5b6b89 0,#5b6b89 49px,#67799b 49px);box-shadow:0 0 0 1px rgba(20,28,45,0.5)"><div class="n">C maj</div><div class="r">I</div></div>
<div class="card" style="left:985.98px;top:685.3px;height:53.3px;width:83.6px;background:#3e6bc6;box-shadow:0 0 0 1px rgba(20,28,45,0.5)"><div class="n">Eb maj</div><div class="r">III</div></div>
<div class="a" style="left:1071.5px;top:686px;width:83px;height:53px;border-radius:5px;background:#353d3c"></div>
<svg class="a" style="left:1071.50px;top:686.00px" width="83" height="53" viewBox="0 0 83 53" ><rect x="1" y="1" width="81" height="51" rx="5" fill="none" stroke="#8cc6be" stroke-width="2" stroke-dasharray="6 3.5"/></svg>
<svg class="a" style="left:1101.00px;top:702.00px" width="24" height="21" viewBox="0 0 24 21" ><path d="M9.7 15.2 Q9.4 13.2 7.8 11.3 Q6.1 9.3 6.2 7.1 Q6.5 2.2 12.1 2.0 Q17.7 2.2 18.0 7.1 Q18.1 9.3 16.4 11.3 Q14.8 13.2 14.5 15.2" fill="none" stroke="#a6c8c6" stroke-width="1.8" stroke-linecap="round" stroke-linejoin="round"/><path d="M9.3 16.6 L14.9 16.6 Q14.7 19.6 12.1 19.6 Q9.5 19.6 9.3 16.6 Z" fill="#a6c8c6"/><g stroke="#a6c8c6" stroke-width="1.8" stroke-linecap="round"><path d="M1.9 8.3 L4.6 8.3"/><path d="M19.6 8.3 L22.3 8.3"/><path d="M2.6 2.7 L4.8 4.1"/><path d="M21.6 2.7 L19.4 4.1"/><path d="M2.6 13.5 L4.8 12.2"/><path d="M21.6 13.5 L19.4 12.2"/></g></svg>
<div class="a" style="left:1221px;top:691px;width:1.5px;height:50px;background:#1f1f1f"></div>
<div class="a" style="left:1309px;top:691px;width:1.5px;height:50px;background:#1f1f1f"></div>
<div class="a" style="left:1253.5px;top:701.7px;width:30px;height:30px;border-radius:15px;background:#434343"></div>
<svg class="a" style="left:1260.00px;top:708.50px" width="17" height="17" viewBox="0 0 17 17" ><path d="M3.6 13.2 L9.5 7.3" stroke="#b4b4b4" stroke-width="4.2" stroke-linecap="round"/><path d="M6 2.8 L14.3 2.8 L14.3 11.1 Z" fill="#b4b4b4" stroke="#b4b4b4" stroke-width="1.3" stroke-linejoin="round"/></svg>
<div class="a" style="left:1328.5px;top:701.0px;width:30px;height:30px;border-radius:15px;background:#434343"></div>
<svg class="a" style="left:1333.50px;top:706.00px" width="20" height="20" viewBox="0 0 20 20" ><g transform="translate(10,10)"><g fill="none" stroke="#a2a2a2" stroke-width="1.5"><rect x="-4.8" y="-2.7" width="9.6" height="5.4" rx="2.7" transform="translate(-2.7,1) rotate(-48)"/><rect x="-4.8" y="-2.7" width="9.6" height="5.4" rx="2.7" transform="translate(2.7,-1) rotate(-48)"/></g></g></svg>
<div class="sec" style="left:0;top:757px;width:1377px;height:51px;border-radius:9px 9px 0 0"></div>
<div class="a" style="left:55.0px;top:757px;width:1.6px;height:51px;background:#222"></div>
<div class="a" style="left:110.5px;top:757px;width:1.6px;height:51px;background:#222"></div>
<div class="a" style="left:389.0px;top:757px;width:1.6px;height:51px;background:#222"></div>
<div class="a" style="left:693.0px;top:757px;width:1.6px;height:51px;background:#222"></div>
<div class="a" style="left:932.0px;top:757px;width:1.6px;height:51px;background:#222"></div>
<div class="a" style="left:1233.0px;top:757px;width:1.6px;height:51px;background:#222"></div>
<svg class="a" style="left:17.00px;top:774.00px" width="23" height="16" viewBox="0 0 23 16" ><rect x="1.5" y="1.5" width="19.5" height="13" rx="2" fill="#9a9a9a"/><rect x="4.8" y="7.5" width="1.6" height="5" fill="#363636"/><rect x="8.7" y="7.5" width="1.6" height="5" fill="#363636"/><rect x="12.6" y="7.5" width="1.6" height="5" fill="#363636"/><rect x="16.5" y="7.5" width="1.6" height="5" fill="#363636"/></svg>
<svg class="a" style="left:73.00px;top:772.00px" width="20" height="20" viewBox="0 0 20 20" ><path d="M17.6 3 L10.8 9.8" stroke="#f2f2f2" stroke-width="2.6" stroke-linecap="round"/><circle cx="6.6" cy="14.3" r="4.6" fill="#f2f2f2"/><circle cx="9.4" cy="11.2" r="3.4" fill="#f2f2f2"/><circle cx="8" cy="12.8" r="1.3" fill="#363636"/></svg>
<svg class="a" style="left:129.20px;top:775.00px" width="14" height="14" viewBox="0 0 14 14" ><circle cx="7" cy="7" r="5.6" fill="none" stroke="#8a8a8a" stroke-width="1.3"/></svg>
<svg class="a" style="left:409.00px;top:775.00px" width="14" height="14" viewBox="0 0 14 14" ><circle cx="7" cy="7" r="5.6" fill="none" stroke="#8a8a8a" stroke-width="1.3"/></svg>
<svg class="a" style="left:714.00px;top:775.00px" width="14" height="14" viewBox="0 0 14 14" ><circle cx="7" cy="7" r="5.6" fill="none" stroke="#8a8a8a" stroke-width="1.3"/></svg>
<svg class="a" style="left:951.00px;top:775.00px" width="14" height="14" viewBox="0 0 14 14" ><circle cx="7" cy="7" r="5.6" fill="none" stroke="#8a8a8a" stroke-width="1.3"/></svg>
<div class="tb" style="left:150.5px;top:774.5px;color:#666">Perform...</div>
<div class="tb" style="left:220.5px;top:774.5px;color:#bdbdbd">Accento</div>
<div class="tb" style="left:346.5px;top:774.5px;color:#bdbdbd">x1</div>
<div class="tb" style="left:439.5px;top:774.5px;color:#5e5e5e">Humanize</div>
<div class="tb" style="left:509px;top:774.5px;color:#bdbdbd">Swing</div>
<div class="tb" style="left:593.5px;top:774.5px;color:#bdbdbd">1/4t</div>
<div class="tb" style="left:638.5px;top:774.5px;color:#bdbdbd">100%</div>
<div class="tb" style="left:742.5px;top:774.5px;color:#5e5e5e">Keys Lock</div>
<div class="tb" style="left:813.5px;top:774.5px;color:#bdbdbd">Scale Notes Ma...</div>
<div class="tb" style="left:981.5px;top:774.5px;color:#5e5e5e">Voice Grouping</div>
<div class="tb" style="left:1105.5px;top:774.5px;color:#bdbdbd">Dynamic</div>
<div class="tb" style="left:1258.5px;top:774.5px;color:#bdbdbd">Semi</div>
<svg class="a" style="left:1303.00px;top:775.00px" width="14" height="14" viewBox="0 0 14 14" ><rect x="1.5" y="6.3" width="11" height="1.6" fill="#a8a8a8"/></svg>
<svg class="a" style="left:1329.00px;top:775.00px" width="14" height="14" viewBox="0 0 14 14" ><rect x="1.5" y="6.3" width="11" height="1.6" fill="#a8a8a8"/><rect x="6.2" y="1.5" width="1.6" height="11" fill="#a8a8a8"/></svg>
<div class="a" style="left:55px;top:809px;width:1322px;height:96px;background:#1c1c1c"></div>
<div class="a" style="left:0;top:809px;width:55px;height:101px;background:#363636"></div>
<div class="a" style="left:0;top:905px;width:1377px;height:7px;background:#353535"></div>
<div class="a" style="left:1379.3px;top:811px;width:2.7px;height:93px;background:#cfcfcf"></div>
<svg class="a" style="left:20.00px;top:825.00px" width="17" height="20" viewBox="0 0 17 20" ><rect x="2.5" y="2" width="11.5" height="15" fill="none" stroke="#9a9a9a" stroke-width="1.5"/><path d="M6.5 2 L6.5 17 M10 2 L10 17" stroke="#9a9a9a" stroke-width="1.5"/><circle cx="2.5" cy="11" r="2" fill="#9a9a9a"/><circle cx="14" cy="7" r="2" fill="#9a9a9a"/></svg>
<svg class="a" style="left:19.00px;top:877.00px" width="18" height="18" viewBox="0 0 18 18" ><g transform="translate(9,8.5)"><rect x="-2.2" y="-8.3" width="4.4" height="5" rx="1" transform="rotate(0)" fill="#9a9a9a"/><rect x="-2.2" y="-8.3" width="4.4" height="5" rx="1" transform="rotate(60)" fill="#9a9a9a"/><rect x="-2.2" y="-8.3" width="4.4" height="5" rx="1" transform="rotate(120)" fill="#9a9a9a"/><rect x="-2.2" y="-8.3" width="4.4" height="5" rx="1" transform="rotate(180)" fill="#9a9a9a"/><rect x="-2.2" y="-8.3" width="4.4" height="5" rx="1" transform="rotate(240)" fill="#9a9a9a"/><rect x="-2.2" y="-8.3" width="4.4" height="5" rx="1" transform="rotate(300)" fill="#9a9a9a"/><circle r="5.8" fill="#9a9a9a"/><circle r="2" fill="#363636"/></g></svg>
<div class="fb" style="left:79.5px;top:808.8px;color:#a3bdf0">F</div>
<div class="a" style="left:83.0px;top:825.8px;width:79px;height:14.5px;border-radius:6px;background:#4f7fd7"></div>
<div class="fb" style="left:79.5px;top:824.8px;color:#fff">C<span style="font-weight:normal;font-size:13px;opacity:0.85">3</span></div>
<div class="fb" style="left:79.5px;top:840.8px;color:#a3bdf0">G#/Ab</div>
<div class="fb" style="left:79.5px;top:856.8px;color:#a3bdf0">D#/Eb</div>
<div class="fb" style="left:79.5px;top:872.8px;color:#a3bdf0">A#/Bb</div>
<div class="fb" style="left:79.5px;top:888.8px;color:#a3bdf0">F</div>
<div class="a" style="left:165.2px;top:811px;width:1px;height:94px;background:#3c3c3c"></div>
<div class="fb" style="left:165.9px;top:808.8px;color:#737373;font-size:10.2px;padding-top:1.2px">F#/Gb</div>
<div class="fb" style="left:165.9px;top:824.8px;color:#737373;font-size:10.2px;padding-top:1.2px">C#/Db</div>
<div class="fb" style="left:165.9px;top:840.8px;color:#737373;font-size:10.2px;padding-top:1.2px">A</div>
<div class="fb" style="left:165.9px;top:856.8px;color:#737373;font-size:10.2px;padding-top:1.2px">E</div>
<div class="fb" style="left:165.9px;top:872.8px;color:#737373;font-size:10.2px;padding-top:1.2px">B</div>
<div class="fb" style="left:165.9px;top:888.8px;color:#737373;font-size:10.2px;padding-top:1.2px">F#/Gb</div>
<div class="a" style="left:251.7px;top:811px;width:1px;height:94px;background:#3c3c3c"></div>
<div class="a" style="left:255.9px;top:809.8px;width:79px;height:14.5px;border-radius:6px;background:#4f7fd7"></div>
<div class="fb" style="left:252.4px;top:808.8px;color:#fff">G</div>
<div class="fb" style="left:252.4px;top:824.8px;color:#a3bdf0">D</div>
<div class="fb" style="left:252.4px;top:840.8px;color:#a3bdf0">A#/Bb</div>
<div class="fb" style="left:252.4px;top:856.8px;color:#a3bdf0">F</div>
<div class="a" style="left:255.9px;top:873.8px;width:79px;height:14.5px;border-radius:6px;background:#4f7fd7"></div>
<div class="fb" style="left:252.4px;top:872.8px;color:#fff">C<span style="font-weight:normal;font-size:13px;opacity:0.85">2</span></div>
<div class="fb" style="left:252.4px;top:888.8px;color:#a3bdf0">G</div>
<div class="a" style="left:338.1px;top:811px;width:1px;height:94px;background:#3c3c3c"></div>
<div class="fb" style="left:338.8px;top:808.8px;color:#a3bdf0">G#/Ab</div>
<div class="fb" style="left:338.8px;top:824.8px;color:#a3bdf0">D#/Eb</div>
<div class="fb" style="left:338.8px;top:840.8px;color:#737373;font-size:10.2px;padding-top:1.2px">B</div>
<div class="fb" style="left:338.8px;top:856.8px;color:#737373;font-size:10.2px;padding-top:1.2px">F#/Gb</div>
<div class="fb" style="left:338.8px;top:872.8px;color:#737373;font-size:10.2px;padding-top:1.2px">C#/Db</div>
<div class="fb" style="left:338.8px;top:888.8px;color:#a3bdf0">G#/Ab</div>
<div class="a" style="left:424.5px;top:811px;width:1px;height:94px;background:#3c3c3c"></div>
<div class="fb" style="left:425.2px;top:808.8px;color:#737373;font-size:10.2px;padding-top:1.2px">A</div>
<div class="a" style="left:428.7px;top:825.8px;width:79px;height:14.5px;border-radius:6px;background:#333"></div>
<div class="fb" style="left:425.2px;top:824.8px;color:#5e5e5e;font-size:10.2px;padding-top:1.2px">E</div>
<div class="a" style="left:428.7px;top:841.8px;width:79px;height:14.5px;border-radius:6px;background:#4f7fd7"></div>
<div class="fb" style="left:425.2px;top:840.8px;color:#fff">C<span style="font-weight:normal;font-size:13px;opacity:0.85">3</span></div>
<div class="fb" style="left:425.2px;top:856.8px;color:#a3bdf0">G</div>
<div class="fb" style="left:425.2px;top:872.8px;color:#a3bdf0">D</div>
<div class="fb" style="left:425.2px;top:888.8px;color:#737373;font-size:10.2px;padding-top:1.2px">A</div>
<div class="a" style="left:511.0px;top:811px;width:1px;height:94px;background:#3c3c3c"></div>
<div class="fb" style="left:511.7px;top:808.8px;color:#a3bdf0">A#/Bb</div>
<div class="fb" style="left:511.7px;top:824.8px;color:#a3bdf0">F</div>
<div class="fb" style="left:511.7px;top:840.8px;color:#737373;font-size:10.2px;padding-top:1.2px">C#/Db</div>
<div class="fb" style="left:511.7px;top:856.8px;color:#a3bdf0">G#/Ab</div>
<div class="fb" style="left:511.7px;top:872.8px;color:#a3bdf0">D#/Eb</div>
<div class="fb" style="left:511.7px;top:888.8px;color:#a3bdf0">A#/Bb</div>
<div class="a" style="left:597.4px;top:811px;width:1px;height:94px;background:#3c3c3c"></div>
<div class="fb" style="left:598.1px;top:808.8px;color:#737373;font-size:10.2px;padding-top:1.2px">B</div>
<div class="fb" style="left:598.1px;top:824.8px;color:#737373;font-size:10.2px;padding-top:1.2px">F#/Gb</div>
<div class="fb" style="left:598.1px;top:840.8px;color:#a3bdf0">D</div>
<div class="fb" style="left:598.1px;top:856.8px;color:#737373;font-size:10.2px;padding-top:1.2px">A</div>
<div class="fb" style="left:598.1px;top:872.8px;color:#737373;font-size:10.2px;padding-top:1.2px">E</div>
<div class="fb" style="left:598.1px;top:888.8px;color:#737373;font-size:10.2px;padding-top:1.2px">B</div>
<div class="a" style="left:683.8px;top:811px;width:1px;height:94px;background:#3c3c3c"></div>
<div class="fb" style="left:684.5px;top:808.8px;color:#a3bdf0">C</div>
<div class="a" style="left:688.0px;top:825.8px;width:79px;height:14.5px;border-radius:6px;background:#4f7fd7"></div>
<div class="fb" style="left:684.5px;top:824.8px;color:#fff">G</div>
<div class="fb" style="left:684.5px;top:840.8px;color:#a3bdf0">D#/Eb</div>
<div class="fb" style="left:684.5px;top:856.8px;color:#a3bdf0">A#/Bb</div>
<div class="fb" style="left:684.5px;top:872.8px;color:#a3bdf0">F</div>
<div class="a" style="left:688.0px;top:889.8px;width:79px;height:14.5px;border-radius:6px;background:#4f7fd7"></div>
<div class="fb" style="left:684.5px;top:888.8px;color:#fff">C<span style="font-weight:normal;font-size:13px;opacity:0.85">2</span></div>
<div class="a" style="left:770.2px;top:811px;width:1px;height:94px;background:#3c3c3c"></div>
<div class="fb" style="left:770.9px;top:808.8px;color:#737373;font-size:10.2px;padding-top:1.2px">C#/Db</div>
<div class="fb" style="left:770.9px;top:824.8px;color:#a3bdf0">G#/Ab</div>
<div class="a" style="left:774.4px;top:841.8px;width:79px;height:14.5px;border-radius:6px;background:#333"></div>
<div class="fb" style="left:770.9px;top:840.8px;color:#5e5e5e;font-size:10.2px;padding-top:1.2px">E</div>
<div class="fb" style="left:770.9px;top:856.8px;color:#737373;font-size:10.2px;padding-top:1.2px">B</div>
<div class="fb" style="left:770.9px;top:872.8px;color:#737373;font-size:10.2px;padding-top:1.2px">F#/Gb</div>
<div class="fb" style="left:770.9px;top:888.8px;color:#737373;font-size:10.2px;padding-top:1.2px">C#/Db</div>
<div class="a" style="left:856.7px;top:811px;width:1px;height:94px;background:#3c3c3c"></div>
<div class="fb" style="left:857.4px;top:808.8px;color:#a3bdf0">D</div>
<div class="fb" style="left:857.4px;top:824.8px;color:#737373;font-size:10.2px;padding-top:1.2px">A</div>
<div class="fb" style="left:857.4px;top:840.8px;color:#a3bdf0">F</div>
<div class="a" style="left:860.9px;top:857.8px;width:79px;height:14.5px;border-radius:6px;background:#4f7fd7"></div>
<div class="fb" style="left:857.4px;top:856.8px;color:#fff">C<span style="font-weight:normal;font-size:13px;opacity:0.85">3</span></div>
<div class="fb" style="left:857.4px;top:872.8px;color:#a3bdf0">G</div>
<div class="fb" style="left:857.4px;top:888.8px;color:#a3bdf0">D</div>
<div class="a" style="left:943.1px;top:811px;width:1px;height:94px;background:#3c3c3c"></div>
<div class="fb" style="left:943.8px;top:808.8px;color:#a3bdf0">D#/Eb</div>
<div class="fb" style="left:943.8px;top:824.8px;color:#a3bdf0">A#/Bb</div>
<div class="fb" style="left:943.8px;top:840.8px;color:#737373;font-size:10.2px;padding-top:1.2px">F#/Gb</div>
<div class="fb" style="left:943.8px;top:856.8px;color:#737373;font-size:10.2px;padding-top:1.2px">C#/Db</div>
<div class="fb" style="left:943.8px;top:872.8px;color:#a3bdf0">G#/Ab</div>
<div class="fb" style="left:943.8px;top:888.8px;color:#a3bdf0">D#/Eb</div>
<div class="a" style="left:1029.5px;top:811px;width:1px;height:94px;background:#3c3c3c"></div>
<div class="fb" style="left:1030.2px;top:808.8px;color:#737373;font-size:10.2px;padding-top:1.2px">E</div>
<div class="fb" style="left:1030.2px;top:824.8px;color:#737373;font-size:10.2px;padding-top:1.2px">B</div>
<div class="a" style="left:1033.7px;top:841.8px;width:79px;height:14.5px;border-radius:6px;background:#4f7fd7"></div>
<div class="fb" style="left:1030.2px;top:840.8px;color:#fff">G</div>
<div class="fb" style="left:1030.2px;top:856.8px;color:#a3bdf0">D</div>
<div class="fb" style="left:1030.2px;top:872.8px;color:#737373;font-size:10.2px;padding-top:1.2px">A</div>
<div class="fb" style="left:1030.2px;top:888.8px;color:#737373;font-size:10.2px;padding-top:1.2px">E</div>
<div class="a" style="left:1116.0px;top:811px;width:1px;height:94px;background:#3c3c3c"></div>
<div class="fb" style="left:1116.7px;top:808.8px;color:#a3bdf0">F</div>
<div class="fb" style="left:1116.7px;top:824.8px;color:#a3bdf0">C<span style="font-weight:normal;font-size:13px;opacity:0.85">4</span></div>
<div class="fb" style="left:1116.7px;top:840.8px;color:#a3bdf0">G#/Ab</div>
<div class="fb" style="left:1116.7px;top:856.8px;color:#a3bdf0">D#/Eb</div>
<div class="fb" style="left:1116.7px;top:872.8px;color:#a3bdf0">A#/Bb</div>
<div class="fb" style="left:1116.7px;top:888.8px;color:#a3bdf0">F</div>
<div class="a" style="left:1202.4px;top:811px;width:1px;height:94px;background:#3c3c3c"></div>
<div class="fb" style="left:1203.1px;top:808.8px;color:#737373;font-size:10.2px;padding-top:1.2px">F#/Gb</div>
<div class="fb" style="left:1203.1px;top:824.8px;color:#737373;font-size:10.2px;padding-top:1.2px">C#/Db</div>
<div class="fb" style="left:1203.1px;top:840.8px;color:#737373;font-size:10.2px;padding-top:1.2px">A</div>
<div class="a" style="left:1206.6px;top:857.8px;width:79px;height:14.5px;border-radius:6px;background:#333"></div>
<div class="fb" style="left:1203.1px;top:856.8px;color:#5e5e5e;font-size:10.2px;padding-top:1.2px">E</div>
<div class="fb" style="left:1203.1px;top:872.8px;color:#737373;font-size:10.2px;padding-top:1.2px">B</div>
<div class="fb" style="left:1203.1px;top:888.8px;color:#737373;font-size:10.2px;padding-top:1.2px">F#/Gb</div>
<div class="a" style="left:1288.8px;top:811px;width:1px;height:94px;background:#3c3c3c"></div>
<div class="fb" style="left:1289.5px;top:808.8px;color:#a3bdf0">G</div>
<div class="fb" style="left:1289.5px;top:824.8px;color:#a3bdf0">D</div>
<div class="fb" style="left:1289.5px;top:840.8px;color:#a3bdf0">A#/Bb</div>
<div class="fb" style="left:1289.5px;top:856.8px;color:#a3bdf0">F</div>
<div class="a" style="left:1293.0px;top:873.8px;width:79px;height:14.5px;border-radius:6px;background:#4f7fd7"></div>
<div class="fb" style="left:1289.5px;top:872.8px;color:#fff">C<span style="font-weight:normal;font-size:13px;opacity:0.85">3</span></div>
<div class="fb" style="left:1289.5px;top:888.8px;color:#a3bdf0">G</div>
<div class="a" style="left:79px;top:811px;width:2.5px;height:94px;background:#5a5a5a"></div>
<div class="a" style="left:58px;top:811px;width:14px;height:14px;border-radius:7px;background:#333"></div>
<div class="fb" style="left:55px;width:20px;top:808.8px;color:#5a5a5a">E</div>
<div class="fb" style="left:55px;width:20px;top:824.8px;color:#666">B</div>
<div class="fb" style="left:55px;width:20px;top:840.8px;color:#a3bdf0">G</div>
<div class="fb" style="left:55px;width:20px;top:856.8px;color:#a3bdf0">D</div>
<div class="fb" style="left:55px;width:20px;top:872.8px;color:#666">A</div>
<div class="fb" style="left:55px;width:20px;top:888.8px;color:#666">E</div>
<div class="a" style="left:294.4px;top:905.5px;width:2px;height:2px;border-radius:1px;background:#777"></div>
<div class="a" style="left:467.2px;top:905.5px;width:2px;height:2px;border-radius:1px;background:#777"></div>
<div class="a" style="left:640.1px;top:905.5px;width:2px;height:2px;border-radius:1px;background:#777"></div>
<div class="a" style="left:812.9px;top:905.5px;width:2px;height:2px;border-radius:1px;background:#777"></div>
<div class="a" style="left:1069.2px;top:905.5px;width:2px;height:2px;border-radius:1px;background:#777"></div>
<div class="a" style="left:1075.2px;top:905.5px;width:2px;height:2px;border-radius:1px;background:#777"></div>
<div class="a" style="left:1331.5px;top:905.5px;width:2px;height:2px;border-radius:1px;background:#777"></div>
</div></body></html>
